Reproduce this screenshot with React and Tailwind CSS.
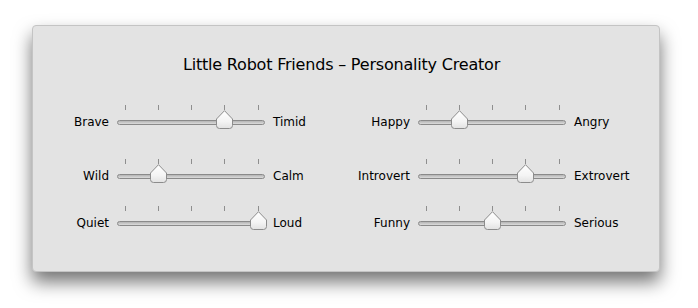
const ROWS = [
  [
    { left: 'Brave', right: 'Timid', value: 3 },
    { left: 'Wild', right: 'Calm', value: 1 },
    { left: 'Quiet', right: 'Loud', value: 4 },
  ],
  [
    { left: 'Happy', right: 'Angry', value: 1 },
    { left: 'Introvert', right: 'Extrovert', value: 3 },
    { left: 'Funny', right: 'Serious', value: 2 },
  ],
]

const TICKS = [0, 1, 2, 3, 4]
const tickX = (i) => 7.5 + i * 33.25

function Thumb() {
  return (
    <svg width="17" height="19" viewBox="0 0 17 19">
      <defs>
        <linearGradient id="thumbFill" x1="0" y1="0" x2="0" y2="1">
          <stop offset="0" stopColor="#ffffff" />
          <stop offset="0.6" stopColor="#f4f4f4" />
          <stop offset="1" stopColor="#e2e2e2" />
        </linearGradient>
      </defs>
      <path
        d="M0.5 9 L8.5 0.7 L16.5 9 V15.5 Q16.5 18.5 13.5 18.5 H3.5 Q0.5 18.5 0.5 15.5 Z"
        fill="url(#thumbFill)"
        stroke="#8c8c8c"
        strokeWidth="1"
      />
    </svg>
  )
}

function Slider({ value }) {
  return (
    <div className="relative w-[148px] h-[24px] shrink-0">
      {TICKS.map((i) => (
        <div key={i} className="absolute top-0 w-px h-[5px] bg-[#8e8e8e]" style={{ left: Math.round(tickX(i)) }} />
      ))}
      <div className="absolute left-0 right-0 top-[15px] h-[5px] rounded-full border border-[#8a8a8a] bg-gradient-to-b from-[#b4b4b4] to-[#dcdcdc]" />
      <div className="absolute top-[5px]" style={{ left: Math.round(tickX(value)) - 8 }}>
        <Thumb />
      </div>
    </div>
  )
}

function Row({ left, right, value }) {
  return (
    <div className="flex items-start">
      <div className="w-[60px] pt-[10px] leading-[14px] text-right">{left}</div>
      <div className="w-[8px]" />
      <Slider value={value} />
      <div className="w-[8px]" />
      <div className="w-[77px] pt-[10px] leading-[14px]">{right}</div>
    </div>
  )
}

export default function App() {
  return (
    <div className="w-[698px] h-[308px] bg-white pt-[25px] pl-[32px]" style={{ fontFamily: '"DejaVu Sans", sans-serif' }}>
      <div className="w-[628px] h-[247px] rounded-[4px] bg-[#e3e3e3] border border-[#c4c4c4] shadow-[0_10px_18px_rgba(0,0,0,0.55)] text-black">
        <div className="pt-[29px] pr-[9px] text-center text-[16px] leading-[20px] tracking-[-0.2px]">
          Little Robot Friends – Personality Creator
        </div>
        <div className="flex pl-[16px] pt-[30px] text-[12px]">
          {ROWS.map((col, c) => (
            <div key={c} className="w-[301px] flex flex-col">
              <Row {...col[0]} />
              <div className="h-[30px]" />
              <Row {...col[1]} />
              <div className="h-[23px]" />
              <Row {...col[2]} />
            </div>
          ))}
        </div>
      </div>
    </div>
  )
}
